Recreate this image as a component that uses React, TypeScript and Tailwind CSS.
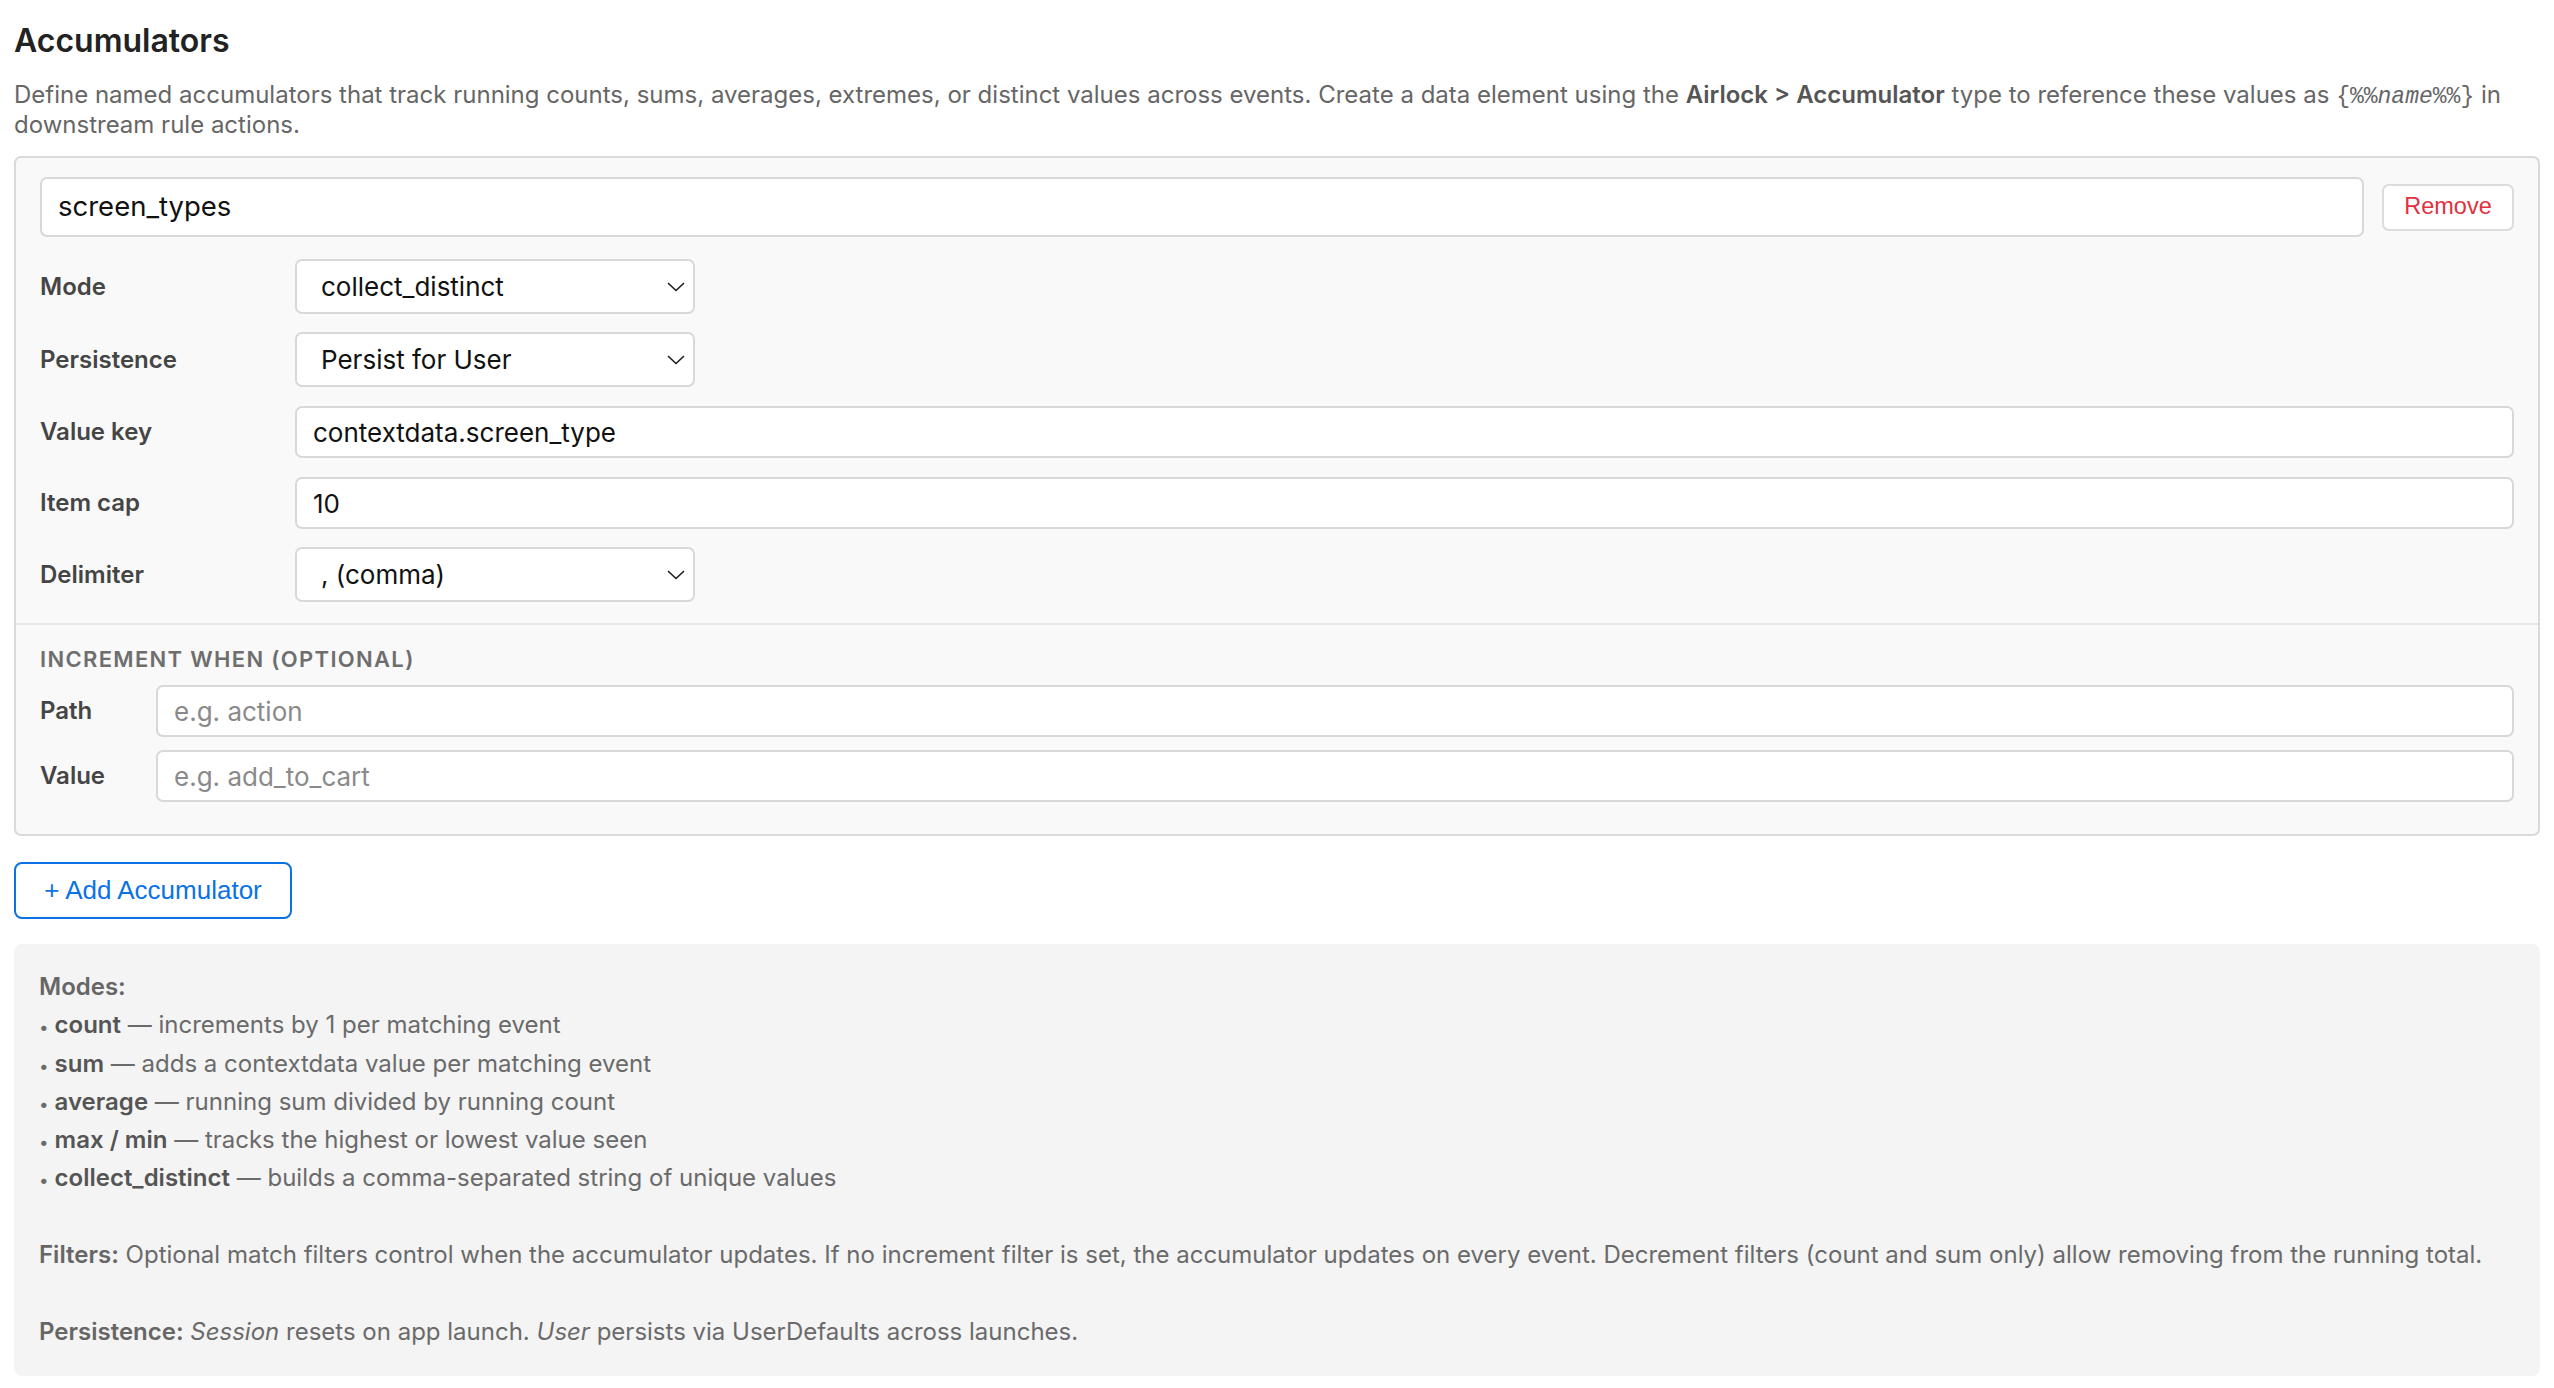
import React from "react";

const Chevron = () => (
  <svg width="18" height="10" viewBox="0 0 18 10" fill="none" className="shrink-0">
    <polyline points="1.5,1.5 9,8.5 16.5,1.5" stroke="#222" strokeWidth="1.7" strokeLinecap="round" strokeLinejoin="round" />
  </svg>
);

function Row({ label, children, mt }: { label: string; children: React.ReactNode; mt: string }) {
  return (
    <div className={`flex items-center ${mt}`}>
      <div className="w-[255px] shrink-0 text-[24px] font-semibold text-[#454545]">{label}</div>
      {children}
    </div>
  );
}

function Select({ value }: { value: string }) {
  return (
    <div className="flex h-[55px] w-[400px] items-center justify-between rounded-[7px] border-2 border-[#d8d8d8] bg-white pl-[24px] pr-[8px] text-[26px] text-[#111]">
      <span>{value}</span>
      <Chevron />
    </div>
  );
}

function Input({ value }: { value: string }) {
  return (
    <div className="flex h-[52px] flex-1 items-center rounded-[7px] border-2 border-[#d8d8d8] bg-white pl-[16px] text-[26px] text-[#111]">
      {value}
    </div>
  );
}

function Placeholder({ value }: { value: string }) {
  return (
    <div className="flex h-[52px] flex-1 items-center rounded-[7px] border-2 border-[#d8d8d8] bg-white pl-[16px] text-[26px] text-[#8a8a8a]">
      {value}
    </div>
  );
}

function Bullet() {
  return <span className="pr-[6px] text-[17px] leading-none">•</span>;
}

export default function App() {
  return (
    <div className="min-h-screen bg-white px-[14px] pt-[19px] pb-[11px] font-['Inter','Noto_Sans',sans-serif]">
      <h1 className="text-[32px] font-semibold leading-[44px] text-[#222]">Accumulators</h1>
      <p className="mt-[17px] text-[24px] leading-[30px] text-[#666]">
        Define named accumulators that track running counts, sums, averages, extremes, or distinct values across events.
        Create a data element using the <b className="font-semibold text-[#555]">Airlock &gt; Accumulator</b> type to
        reference these values as{" "}
        <code className="font-['Liberation_Mono',monospace] text-[23px] leading-none">
          {"{%%"}
          <i>name</i>
          {"%%}"}
        </code>{" "}
        in downstream rule actions.
      </p>

      <div className="mt-[16px] rounded-[7px] border-2 border-[#d9d9d9] bg-[#f9f9f9]">
        <div className="px-[24px] pt-[19px] pb-[21px]">
          <div className="flex items-center gap-[18px]">
            <div className="flex h-[60px] flex-1 items-center rounded-[7px] border-2 border-[#d8d8d8] bg-white pl-[16px] text-[27.5px] text-[#111]">
              screen_types
            </div>
            <button className="h-[47px] w-[132px] rounded-[7px] border-2 border-[#dcdcdc] bg-white font-['Liberation_Sans',sans-serif] text-[23.5px] text-[#e0313f]">
              Remove
            </button>
          </div>

          <Row label="Mode" mt="mt-[22px]">
            <Select value="collect_distinct" />
          </Row>
          <Row label="Persistence" mt="mt-[18px]">
            <Select value="Persist for User" />
          </Row>
          <Row label="Value key" mt="mt-[19px]">
            <Input value="contextdata.screen_type" />
          </Row>
          <Row label="Item cap" mt="mt-[19px]">
            <Input value="10" />
          </Row>
          <Row label="Delimiter" mt="mt-[18px]">
            <Select value=", (comma)" />
          </Row>
        </div>

        <div className="border-t-2 border-[#e6e6e6] px-[24px] pt-[21px] pb-[32px]">
          <div className="text-[22px] font-semibold uppercase leading-[26px] tracking-[0.06em] text-[#6e6e6e]">
            Increment when (optional)
          </div>
          <div className="mt-[13px] flex items-center">
            <div className="w-[116px] shrink-0 text-[24px] font-semibold text-[#454545]">Path</div>
            <Placeholder value="e.g. action" />
          </div>
          <div className="mt-[13px] flex items-center">
            <div className="w-[116px] shrink-0 text-[24px] font-semibold text-[#454545]">Value</div>
            <Placeholder value="e.g. add_to_cart" />
          </div>
        </div>
      </div>

      <button className="mt-[26px] h-[57px] w-[278px] rounded-[8px] border-2 border-[#0b72e5] bg-white font-['Liberation_Sans',sans-serif] text-[26px] text-[#0b72e5]">
        + Add Accumulator
      </button>

      <div className="mt-[25px] rounded-[8px] bg-[#f4f4f4] px-[25px] pt-[24px] pb-[25px] text-[24px] leading-[38.3px] text-[#6a6a6a]">
        <div className="font-semibold text-[#666]">Modes:</div>
        <div>
          <Bullet />
          <b className="font-semibold text-[#555]">count</b> — increments by 1 per matching event
        </div>
        <div>
          <Bullet />
          <b className="font-semibold text-[#555]">sum</b> — adds a contextdata value per matching event
        </div>
        <div>
          <Bullet />
          <b className="font-semibold text-[#555]">average</b> — running sum divided by running count
        </div>
        <div>
          <Bullet />
          <b className="font-semibold text-[#555]">max / min</b> — tracks the highest or lowest value seen
        </div>
        <div>
          <Bullet />
          <b className="font-semibold text-[#555]">collect_distinct</b> — builds a comma-separated string of unique values
        </div>
        <div className="h-[38.3px]" />
        <div>
          <b className="font-semibold text-[#666]">Filters:</b> Optional match filters control when the accumulator updates.
          If no increment filter is set, the accumulator updates on every event. Decrement filters (count and sum only)
          allow removing from the running total.
        </div>
        <div className="h-[38.3px]" />
        <div>
          <b className="font-semibold text-[#666]">Persistence:</b> <i>Session</i> resets on app launch. <i>User</i>{" "}
          persists via UserDefaults across launches.
        </div>
      </div>
    </div>
  );
}
